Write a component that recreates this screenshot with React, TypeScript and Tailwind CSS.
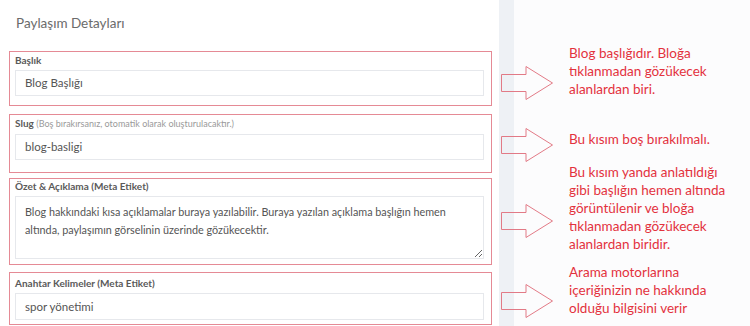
import React from 'react';

const formFont = { fontFamily: 'Lato, "Noto Sans", sans-serif' };

function Arrow({ className }: { className?: string }) {
  return (
    <svg width="52" height="34" viewBox="0 0 52 34" className={className}>
      <polygon
        points="0.5,8.5 25,8.5 25,0.5 51.5,17 25,33.5 25,25.5 0.5,25.5"
        fill="none"
        stroke="#e27a86"
        strokeWidth="1"
      />
    </svg>
  );
}

export default function App() {
  return (
    <div className="relative flex h-[326px] w-[750px] overflow-hidden" style={formFont}>
      {/* form panel */}
      <div className="w-[499px] bg-white pl-[9px] pr-[7px]">
        <h2 className="ml-[7px] mt-[14px] text-[13.5px] leading-[18px] font-normal text-[#6b6b6b]">
          Paylaşım Detayları
        </h2>

        <div className="mt-[19px] border border-[#e58a95] pl-[5px] pr-[7px] pt-[1px] pb-[9px]">
          <label className="block text-[10px] font-bold leading-[14px] text-[#5a5a5a]">Başlık</label>
          <div className="mt-[3px] flex h-[26px] items-center border border-[#e6e8ec] bg-white px-[9px] text-[11.5px] text-[#555]">
            Blog Başlığı
          </div>
        </div>

        <div className="mt-[8px] border border-[#e58a95] pl-[5px] pr-[7px] pt-[1px] pb-[12px]">
          <label className="block text-[10px] font-bold leading-[14px] text-[#5a5a5a]">
            Slug{' '}
            <span className="text-[9px] font-normal text-[#9a9a9a]">
              (Boş bırakırsanız, otomatik olarak oluşturulacaktır.)
            </span>
          </label>
          <div className="mt-[3px] flex h-[26px] items-center border border-[#e6e8ec] bg-white px-[9px] text-[11.5px] text-[#555]">
            blog-basligi
          </div>
        </div>

        <div className="mt-[5px] border border-[#e58a95] pl-[5px] pr-[7px] pt-[0px] pb-[5px]">
          <label className="block text-[10px] font-bold leading-[14px] text-[#5a5a5a]">
            Özet &amp; Açıklama (Meta Etiket)
          </label>
          <textarea
            readOnly
            className="mt-[3px] block h-[63px] w-full resize-y border border-[#e6e8ec] bg-white px-[9px] pt-[6px] text-[10.8px] leading-[18px] text-[#555] outline-none"
            style={formFont}
            defaultValue="Blog hakkındaki kısa açıklamalar buraya yazılabilir. Buraya yazılan açıklama başlığın hemen altında, paylaşımın görselinin üzerinde gözükecektir."
          />
        </div>

        <div className="mt-[7px] border border-[#e58a95] pl-[5px] pr-[7px] pt-[3px] pb-[4px]">
          <label className="block text-[10px] font-bold leading-[14px] text-[#5a5a5a]">
            Anahtar Kelimeler (Meta Etiket)
          </label>
          <div className="mt-[3px] flex h-[27px] items-center border border-[#e6e8ec] bg-white px-[9px] text-[11.5px] text-[#555]">
            spor yönetimi
          </div>
        </div>
      </div>

      {/* divider strip */}
      <div className="w-[15px] bg-[#eef1f5]" />

      {/* right side */}
      <div className="flex-1 bg-[#fcfcfd]" />

      {/* annotations */}
      <div className="absolute left-[501px] top-0 flex w-[249px] flex-col text-[13.5px] leading-[18px] text-[#e3323d]">
        <div className="mt-[44px] flex items-start">
          <Arrow className="mt-[22px] shrink-0" />
          <p className="ml-[16px]">
            Blog başlığıdır. Bloğa
            <br />
            tıklanmadan gözükecek
            <br />
            alanlardan biri.
          </p>
        </div>
        <div className="mt-[28px] flex items-start">
          <Arrow className="shrink-0" />
          <p className="ml-[16px] mt-[2px]">Bu kısım boş bırakılmalı.</p>
        </div>
        <div className="mt-[1px] flex items-start">
          <Arrow className="mt-[41px] shrink-0" />
          <p className="ml-[16px]">
            Bu kısım yanda anlatıldığı
            <br />
            gibi başlığın hemen altında
            <br />
            görüntülenir ve bloğa
            <br />
            tıklanmadan gözükecek
            <br />
            alanlardan biridir.
          </p>
        </div>
        <div className="mt-[10px] flex items-start">
          <Arrow className="mt-[21px] shrink-0" />
          <p className="ml-[16px]">
            Arama motorlarına
            <br />
            içeriğinizin ne hakkında
            <br />
            olduğu bilgisini verir
          </p>
        </div>
      </div>
    </div>
  );
}
